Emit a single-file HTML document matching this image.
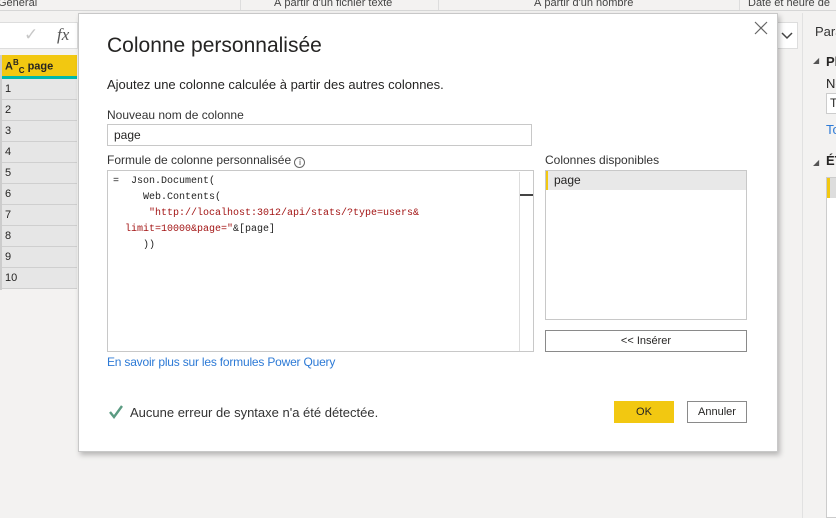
<!DOCTYPE html><html><head><meta charset="utf-8"><style>
*{margin:0;padding:0;box-sizing:border-box}
body{width:836px;height:518px;overflow:hidden;background:#f3f2f1;font-family:"Liberation Sans",sans-serif;color:#252423;position:relative;font-size:12px}
.a{position:absolute}
.mono{font-family:"Liberation Mono",monospace;font-size:10px}
.row{position:absolute;left:2px;width:75px;height:21px;background:#e6e6e6;border-bottom:1px solid #cfcfcf;padding:4px 3px;font-size:11px}
</style></head><body>
<div class="a" style="left:0;top:0;width:836px;height:11px;background:#f3f2f1;border-bottom:1px solid #d6d6d6;font-size:11px;line-height:6px;overflow:hidden;color:#444">
<span class="a" style="left:-2px;top:0">Général</span>
<span class="a" style="left:240px;top:0;width:1px;height:11px;background:#ddd"></span>
<span class="a" style="left:274px;top:0">À partir d'un fichier texte</span>
<span class="a" style="left:438px;top:0;width:1px;height:11px;background:#ddd"></span>
<span class="a" style="left:534px;top:0">À partir d'un nombre</span>
<span class="a" style="left:739px;top:0;width:1px;height:11px;background:#ddd"></span>
<span class="a" style="left:748px;top:0">Date et heure de</span>
</div>
<div class="a" style="left:0;top:22px;width:78px;height:27px;background:#fff;border:1px solid #ddd;border-left:none"></div>
<div class="a" style="left:24px;top:25px;color:#c8c8c8;font-size:17px">✓</div>
<div class="a" style="left:57px;top:25px;color:#555;font-family:'Liberation Serif',serif;font-style:italic;font-size:17px">fx</div>
<div class="a" style="left:0;top:55px;width:2px;height:235px;background:#ccc"></div>
<div class="a" style="left:2px;top:55px;width:75px;height:21px;background:#f2c811;font-size:11px;font-weight:bold;padding:3px 3px">A<sup style="font-size:8px">B</sup><sub style="font-size:8px">C</sub> page</div>
<div class="a" style="left:2px;top:76px;width:75px;height:3px;background:#01b8aa"></div>
<div class="row" style="top:79px">1</div><div class="row" style="top:100px">2</div><div class="row" style="top:121px">3</div><div class="row" style="top:142px">4</div><div class="row" style="top:163px">5</div><div class="row" style="top:184px">6</div><div class="row" style="top:205px">7</div><div class="row" style="top:226px">8</div><div class="row" style="top:247px">9</div><div class="row" style="top:268px">10</div>
<div class="a" style="left:776px;top:22px;width:22px;height:27px;background:#fff;border:1px solid #ddd"></div>
<svg class="a" style="left:780px;top:30px" width="14" height="10"><path d="M2 3l5 5 5-5" stroke="#444" stroke-width="1.5" fill="none"/></svg>
<div class="a" style="left:802px;top:13px;width:34px;height:505px;background:#f3f2f1;border-left:1px solid #e1e1e1"></div>
<div class="a" style="left:815px;top:24px;font-size:13px;color:#333">Para</div>
<div class="a" style="left:813px;top:56px;font-size:8px;color:#555">◢</div>
<div class="a" style="left:826px;top:54px;font-size:13px;font-weight:bold">Pl</div>
<div class="a" style="left:826px;top:76px;font-size:13px">No</div>
<div class="a" style="left:826px;top:93px;width:12px;height:21px;background:#fff;border:1px solid #ccc;padding:2px 3px;font-size:12px">T</div>
<div class="a" style="left:826px;top:122px;font-size:13px;color:#2d7ad6">To</div>
<div class="a" style="left:813px;top:158px;font-size:8px;color:#555">◢</div>
<div class="a" style="left:826px;top:153px;font-size:13px;font-weight:bold">ÉT</div>
<div class="a" style="left:826px;top:177px;width:12px;height:341px;background:#fff;border:1px solid #ccc"></div>
<div class="a" style="left:827px;top:178px;width:11px;height:20px;background:#ddd;border-left:3px solid #f2c811"></div>

<div class="a" style="left:78px;top:13px;width:700px;height:439px;background:#fff;border:1px solid #c8c8c8;box-shadow:2px 3px 5px rgba(0,0,0,.25)"></div>
<svg class="a" style="left:754px;top:21px" width="14" height="14"><path d="M1 1l12 12M13 1L1 13" stroke="#666" stroke-width="1.2"/></svg>
<div class="a" style="left:107px;top:34px;font-size:21px;color:#252423">Colonne personnalisée</div>
<div class="a" style="left:107px;top:77px;font-size:13px">Ajoutez une colonne calculée à partir des autres colonnes.</div>
<div class="a" style="left:107px;top:108px;font-size:12px;color:#333">Nouveau nom de colonne</div>
<div class="a" style="left:107px;top:124px;width:425px;height:22px;border:1px solid #c8c8c8;padding:3px 6px;font-size:12px">page</div>
<div class="a" style="left:107px;top:153px;font-size:12px;color:#333">Formule de colonne personnalisée <span style="display:inline-block;width:11px;height:11px;border:1px solid #666;border-radius:50%;font-size:8px;text-align:center;line-height:10px;vertical-align:-1px">i</span></div>
<div class="a" style="left:107px;top:170px;width:427px;height:182px;border:1px solid #c8c8c8"></div>
<div class="a" style="left:519px;top:172px;width:1px;height:179px;background:#ddd"></div>
<div class="a" style="left:520px;top:194px;width:13px;height:2px;background:#444"></div>
<div class="a mono" style="left:113px;top:174px;line-height:16px;white-space:pre;color:#222">=  Json.Document(
     Web.Contents(
      <span style="color:#a31515">"http://localhost:3012/api/stats/?type=users&amp;</span>
  <span style="color:#a31515">limit=10000&amp;page="</span>&amp;[page]
     ))</div>
<div class="a" style="left:545px;top:153px;font-size:12px;color:#333">Colonnes disponibles</div>
<div class="a" style="left:545px;top:170px;width:202px;height:150px;border:1px solid #c8c8c8"></div>
<div class="a" style="left:546px;top:171px;width:200px;height:19px;background:#e8e8e8;border-left:2px solid #f2c811;padding:2px 6px;font-size:12px">page</div>
<div class="a" style="left:545px;top:330px;width:202px;height:22px;border:1px solid #8a8a8a;text-align:center;font-size:11px;line-height:20px">&lt;&lt; Insérer</div>
<div class="a" style="left:107px;top:355px;font-size:12px;color:#2d7ad6;letter-spacing:-0.2px">En savoir plus sur les formules Power Query</div>
<svg class="a" style="left:108px;top:404px" width="16" height="16"><path d="M2 8l4 5 8-11" stroke="#5b9b82" stroke-width="2.4" fill="none"/></svg>
<div class="a" style="left:130px;top:405px;font-size:13px;color:#333">Aucune erreur de syntaxe n'a été détectée.</div>
<div class="a" style="left:614px;top:401px;width:60px;height:22px;background:#f2c811;text-align:center;line-height:22px;font-size:11px">OK</div>
<div class="a" style="left:687px;top:401px;width:60px;height:22px;border:1px solid #8a8a8a;text-align:center;line-height:20px;font-size:11px">Annuler</div>
</body></html>
